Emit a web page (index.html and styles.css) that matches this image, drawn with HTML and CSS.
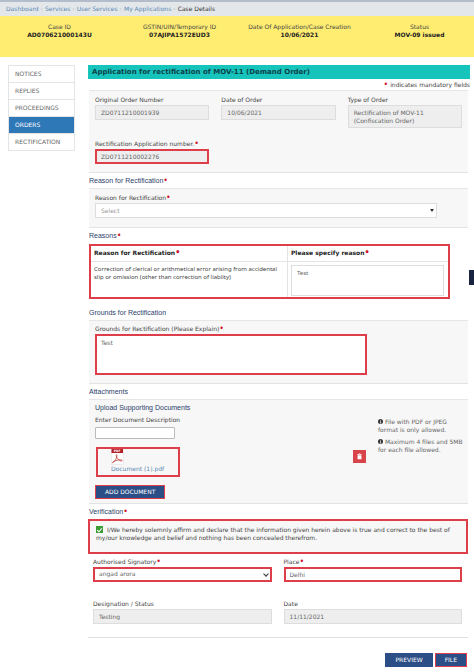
FILE: index.html
```html
<!DOCTYPE html>
<html lang="en">
<head>
  <meta charset="UTF-8">
  <title>Case Details</title>
  <link rel="stylesheet" href="styles.css">
</head>
<body>

<nav class="breadcrumb">
  <a href="#">Dashboard</a>
  <a href="#">Services</a>
  <a href="#">User Services</a>
  <a href="#">My Applications</a>
  <span>Case Details</span>
</nav>

<header class="case-bar">
  <div>Case ID<strong>AD070621000143U</strong></div>
  <div>GSTIN/UIN/Temporary ID<strong>07AJIPA1572EUD3</strong></div>
  <div>Date Of Application/Case Creation<strong>10/06/2021</strong></div>
  <div>Status<strong>MOV-09 issued</strong></div>
</header>

<div class="layout">
  <nav class="side-menu">
    <a href="#">NOTICES</a>
    <a href="#">REPLIES</a>
    <a href="#">PROCEEDINGS</a>
    <a href="#" class="active">ORDERS</a>
    <a href="#">RECTIFICATION</a>
  </nav>

  <main>
    <h1>Application for rectification of MOV-11 (Demand Order)</h1>
    <p class="mandatory"><i>•</i> indicates mandatory fields</p>

    <section class="panel order-panel">
      <div class="three-cols">
        <div class="field">
          <label for="orderNo">Original Order Number</label>
          <input type="text" id="orderNo" value="ZD0711210001939" readonly>
        </div>
        <div class="field">
          <label for="orderDate">Date of Order</label>
          <input type="text" id="orderDate" value="10/06/2021" readonly>
        </div>
        <div class="field">
          <label for="orderType">Type of Order</label>
          <textarea id="orderType" class="order-type" readonly>Rectification of MOV-11
(Confiscation Order)</textarea>
        </div>
        <div class="field">
          <label for="appNo">Rectification Application number.<i>•</i></label>
          <input type="text" id="appNo" class="marked" value="ZD0711210002276" readonly>
        </div>
      </div>
    </section>

    <h2>Reason for Rectification<i>•</i></h2>
    <section class="panel reason-panel">
      <div class="field">
        <label for="reason">Reason for Rectification<i>•</i></label>
        <div class="select-box solid-arrow">
          <select id="reason" class="placeholder">
            <option>Select</option>
          </select>
        </div>
      </div>
    </section>

    <h2>Reasons<i>•</i></h2>
    <table class="reasons">
      <thead>
        <tr>
          <th>Reason for Rectification<i>•</i></th>
          <th>Please specify reason<i>•</i></th>
        </tr>
      </thead>
      <tbody>
        <tr>
          <td>Correction of clerical or arithmetical error arising from accidental<br>slip or omission (other than correction of liablity)</td>
          <td><textarea aria-label="Please specify reason">Test</textarea></td>
        </tr>
      </tbody>
    </table>

    <h2>Grounds for Rectification</h2>
    <section class="panel grounds-panel">
      <div class="field">
        <label for="grounds">Grounds for Rectification (Please Explain)<i>•</i></label>
        <textarea id="grounds" class="marked">Test</textarea>
      </div>
    </section>

    <h2>Attachments</h2>
    <section class="panel attach-panel">
      <div class="upload">
        <h3>Upload Supporting Documents</h3>
        <div class="field">
          <label for="docDesc">Enter Document Description</label>
          <input type="text" id="docDesc" class="doc-desc">
        </div>
        <div class="file-row">
          <div class="file-box">
            <svg class="pdf-icon" viewBox="0 0 13 16" aria-hidden="true">
              <rect x="0.5" y="1" width="12" height="14.5" fill="#fff" stroke="#ddd" stroke-width="0.5"/>
              <rect x="0.5" y="0" width="11.5" height="4" fill="#b51f2a"/>
              <text x="6.2" y="3.3" text-anchor="middle">PDF</text>
              <path d="M1.6 13.8C3.4 13 6 9.4 6 6.4C6 5.4 5.1 5.5 5.2 6.5C5.4 8.8 7.6 11.2 9.8 11.9C11.4 12.4 11.8 11.3 10.4 11C7.8 10.6 4.2 11.5 2.1 12.8C1.2 13.4 1.3 14 1.6 13.8Z" fill="none" stroke="#c4423f" stroke-width="0.8"/>
            </svg>
            <a href="#">Document (1).pdf</a>
          </div>
          <button class="delete" aria-label="Delete document">
            <svg viewBox="0 0 12 12" aria-hidden="true">
              <path d="M4.2 4.8h3.6v3.8H4.2zM4 3.8h4v0.6H4zM5.2 3.2h1.6v0.6H5.2z" fill="#fff"/>
            </svg>
          </button>
        </div>
        <button class="btn marked">ADD DOCUMENT</button>
      </div>
      <div class="hints">
        <p><svg viewBox="0 0 10 10" aria-hidden="true"><circle cx="5" cy="5" r="5" fill="#333"/><path d="M5 1.6v1.6M4 4.4h1.2v3.8M3.8 8h2.6" stroke="#fff" stroke-width="1.3" fill="none"/></svg> File with PDF or JPEG<br>format is only allowed.</p>
        <p><svg viewBox="0 0 10 10" aria-hidden="true"><circle cx="5" cy="5" r="5" fill="#333"/><path d="M5 1.6v1.6M4 4.4h1.2v3.8M3.8 8h2.6" stroke="#fff" stroke-width="1.3" fill="none"/></svg> Maximum 4 files and 5MB<br>for each file allowed.</p>
      </div>
    </section>

    <h2>Verification<i>•</i></h2>
    <div class="declaration">
      <input type="checkbox" id="agree" checked>
      <label for="agree">I/We hereby solemnly affirm and declare that the information given herein above is true and correct to the best of<br>my/our knowledge and belief and nothing has been concealed therefrom.</label>
    </div>

    <div class="two-cols">
      <div class="field">
        <label for="signatory">Authorised Signatory<i>•</i></label>
        <div class="select-box">
          <select id="signatory" class="marked">
            <option>angad arora</option>
          </select>
        </div>
      </div>
      <div class="field">
        <label for="place">Place<i>•</i></label>
        <input type="text" id="place" class="marked" value="Delhi">
      </div>
      <div class="field">
        <label for="designation">Designation / Status</label>
        <input type="text" id="designation" value="Testing" readonly>
      </div>
      <div class="field">
        <label for="date">Date</label>
        <input type="text" id="date" value="11/11/2021" readonly>
      </div>
    </div>

    <div class="actions">
      <button class="btn">PREVIEW</button>
      <button class="btn marked">FILE</button>
    </div>
  </main>
</div>

<div class="side-tab"></div>

</body>
</html>
```
FILE: styles.css
```css
* {
  box-sizing: border-box;
}

body {
  margin: 0;
  background: #fff;
  color: #444;
  font-family: 'DejaVu Sans', Verdana, sans-serif;
  font-size: 6px;
  line-height: 8px;
}

a {
  color: #5b87b3;
  text-decoration: none;
}

i {
  color: #d0142c;
  font-family: 'DejaVu Sans', Verdana, sans-serif;
  font-size: 8px;
  font-style: normal;
  line-height: 6px;
}

p {
  margin: 0;
}

/* top of page */
.breadcrumb {
  display: flex;
  height: 16px;
  padding: 0 6px;
  border-top: 2px solid #b3bccb;
  background: #e3e7ea;
  line-height: 14px;
}

.breadcrumb a::after {
  content: '›';
  margin: 0 2px;
  color: #b4bac0;
}

.breadcrumb span {
  color: #333;
}

.case-bar {
  display: grid;
  grid-template-columns: repeat(4, 1fr);
  gap: 11px;
  padding: 7px 0 18px 5px;
  background: #ffed72;
  text-align: center;
  white-space: nowrap;
}

.case-bar strong {
  display: block;
  color: #222;
}

.layout {
  display: grid;
  grid-template-columns: 67px minmax(0, 1fr);
  gap: 13px;
  align-items: start;
  padding: 8px 4px 4px 8px;
}

.side-menu {
  border: 1px solid #e4e4e4;
  border-bottom: 0;
}

.side-menu a {
  display: block;
  height: 17px;
  padding: 0 6px;
  border-bottom: 1px solid #e4e4e4;
  color: #666;
  line-height: 16px;
}

.side-menu .active {
  background: #2f78b7;
  color: #fff;
}

/* headings */
h1 {
  margin: 0;
  padding: 0 4px;
  background: #17c4bb;
  color: #0c3f4a;
  font-size: 7px;
  line-height: 14px;
}

h2, h3 {
  margin: 0;
  color: #2c3e6b;
  font-family: 'Liberation Sans', Arial, sans-serif;
  font-size: 7px;
  font-weight: normal;
  line-height: 15px;
}

h2 {
  height: 15px;
  padding-left: 1px;
}

.mandatory {
  height: 11px;
  padding-top: 2px;
  text-align: right;
}

/* panels */
.panel {
  margin: 0 2px 0 1px;
  padding: 4px 6px;
  border-top: 1px solid #e6e6e6;
  border-bottom: 1px solid #e0e4e4;
  background: #f7f7f7;
}

.order-panel {
  padding-bottom: 8px;
}

.three-cols {
  display: grid;
  grid-template-columns: repeat(3, 1fr);
  gap: 11px 12px;
}

.field label {
  display: block;
  height: 10px;
  line-height: 9px;
  white-space: nowrap;
}

input, select, textarea {
  display: block;
  width: 100%;
  height: 15px;
  margin: 0;
  padding: 0 5px;
  border: 1px solid #ddd;
  border-radius: 0;
  background: #fff;
  color: #666;
  font: inherit;
}

textarea {
  padding: 3px 5px;
  overflow: hidden;
  resize: none;
}

input:read-only:not([type="checkbox"]),
textarea:read-only {
  background: #eee;
}

.order-type {
  height: 23px;
}

input.marked, select.marked, textarea.marked {
  padding-left: 4px;
  border: 2px solid #de3d4a;
}

.reason-panel {
  padding: 4px 31px 9px 6px;
}

.select-box {
  position: relative;
}

select {
  appearance: none;
}

.select-box::after {
  content: '';
  position: absolute;
  top: 5px;
  right: 4px;
  width: 3px;
  height: 3px;
  border: solid #333;
  border-width: 0 1px 1px 0;
  transform: rotate(45deg);
}

.solid-arrow::after {
  top: 6px;
  right: 3px;
  width: 0;
  height: 0;
  border: solid transparent;
  border-width: 3px 2px 0;
  border-top-color: #333;
  transform: none;
}

.placeholder {
  color: #999;
}

.reasons {
  width: calc(100% - 21px);
  margin: 1px 0 6px 1px;
  border: 2px solid #de3d4a;
  border-collapse: collapse;
}

.reasons th, .reasons td {
  padding: 3px 4px 0 3px;
  border: 1px solid #e4e4e4;
  text-align: left;
  vertical-align: top;
}

.reasons th {
  height: 16px;
  border-top: 0;
  color: #222;
}

.reasons td {
  font-family: 'Noto Sans', sans-serif;
  white-space: nowrap;
}

.reasons th:first-child, .reasons td:first-child {
  width: 55%;
  border-left: 0;
}

.reasons textarea {
  height: 31px;
  margin-bottom: 1px;
}

.grounds-panel {
  padding: 3px 6px 8px;
}

.grounds-panel .marked {
  width: 74%;
  height: 41px;
}

/* attachments */
.attach-panel {
  display: grid;
  grid-template-columns: minmax(0, 1fr) 87px;
  gap: 12px;
  padding: 0 3px 4px 6px;
}

.upload .field label {
  height: 12px;
  line-height: 10px;
}

.doc-desc {
  width: 80px;
  height: 12px;
  border-color: #bbb;
  border-radius: 1px;
}

.file-row {
  display: flex;
  justify-content: space-between;
  align-items: flex-start;
  margin: 8px 0;
}

.file-box {
  width: 84px;
  height: 30px;
  margin-left: 1px;
  padding-left: 13px;
  border: 2px solid #de3d4a;
}

.file-box a {
  display: block;
}

.pdf-icon {
  display: block;
  width: 13px;
  height: 16px;
}

.pdf-icon text {
  fill: #fff;
  font-size: 3px;
  font-weight: bold;
}

.delete {
  width: 13px;
  height: 13px;
  margin-top: 3px;
  padding: 0;
  border: 0;
  background: #d9434a;
}

.delete svg {
  display: block;
}

.hints {
  padding-top: 18px;
  white-space: nowrap;
}

.hints p {
  margin-bottom: 4px;
  color: #666;
}

.hints svg {
  width: 5px;
  height: 5px;
}

.btn {
  display: block;
  height: 14px;
  padding: 0 9px;
  border: 1px solid #2c4e86;
  background: #2c4e86;
  color: #fff;
  font: inherit;
}

.btn.marked {
  border-color: #de3d4a;
}

/* verification */
.declaration {
  margin-right: 2px;
  padding: 5px 6px 10px;
  border: 2px solid #de3d4a;
  background: #f7f7f7;
  white-space: nowrap;
}

.declaration input {
  display: inline-block;
  width: 7px;
  height: 7px;
  margin-right: 2px;
  padding: 0;
  border: 0;
  background: #3a9c32;
  appearance: none;
  vertical-align: middle;
}

.declaration input::after {
  content: '';
  display: block;
  width: 2px;
  height: 4px;
  margin: 1px 0 0 2px;
  border: solid #fff;
  border-width: 0 1px 1px 0;
  transform: rotate(40deg);
}

.two-cols {
  display: grid;
  grid-template-columns: repeat(2, 1fr);
  gap: 17px 12px;
  margin-right: 2px;
  padding: 3px 6px 13px 5px;
  border-bottom: 1px solid #e0e0e0;
}

.actions {
  display: flex;
  justify-content: flex-end;
  gap: 2px;
  margin: 15px 3px 0 0;
}

/* collapsed tab that floats at the window's edge */
.side-tab {
  position: fixed;
  top: 270px;
  right: 0;
  width: 5px;
  height: 15px;
  background: #17233f;
}
```
